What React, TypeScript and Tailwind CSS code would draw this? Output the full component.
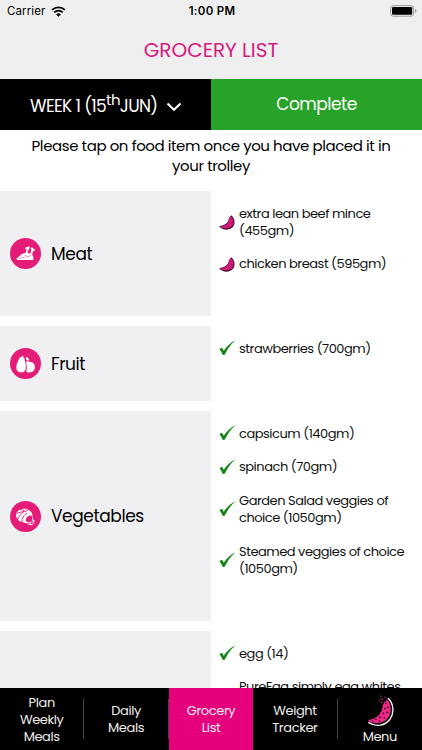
import React from 'react';

interface IGroceryItem {
  name: string;
  inTrolley: boolean;
}

interface IGroceryGroup {
  title: string;
  icon: React.ReactNode;
  height: string;
  items: IGroceryItem[];
}

const MeatIcon = () => (
  <svg viewBox="0 0 31 31" className="h-[31px] w-[31px] shrink-0">
    <circle cx="15.5" cy="15.5" r="15.5" fill="#e51b78" />
    <path
      d="M6.500 20.700c.6-1.200 2.200-1.700 3.100-2.700 1.300-1.700 3.400-2.900 5.900-3 1.600-.1 3.500-.1 5.200.8 2.100 1.100 3.200 3.600 2.500 6.100H8c-1 0-1.800-.5-1.500-1.200z"
      fill="#fff"
    />
    <path d="M16.200 15.800 18 10.500M21.200 16.500l1.400-5.300" stroke="#fff" strokeWidth="1.900" strokeLinecap="round" />
    <g fill="#fff">
      <circle cx="16.600" cy="10.200" r="1.200" />
      <circle cx="18.600" cy="9.600" r="1.200" />
      <circle cx="22" cy="10.700" r="1.200" />
      <circle cx="23.700" cy="11.900" r="1.200" />
    </g>
    <path d="M14.600 17.200c1.900 1.600 4.600 1.600 6.600.2M9.500 19.900c2.500.2 4.500-.2 5.700-.9" stroke="#e51b78" strokeWidth=".5" fill="none" />
  </svg>
);

const FruitIcon = () => (
  <svg viewBox="0 0 31 31" className="h-[31px] w-[31px] shrink-0">
    <circle cx="15.5" cy="15.5" r="15.5" fill="#e51b78" />
    <path
      d="M12.600 7.800l.8.300-.2 1.200c1.700.9 1.600 3 2 4.700.3 1.600.6 2.800.6 4.800 0 3.800-1.300 5.500-4.400 5.500-3.600 0-5.100-1.800-5.100-4.800 0-2.900 1-4.300 1.700-6.300.6-2 1.700-4.200 3.800-4.500z"
      fill="#fff"
    />
    <path
      d="M15.900 13.700c1.700-.9 3.200-.4 4.300.2 2.700-.1 4.700 2.100 4.700 5.200 0 3.200-1.600 5.200-4.300 5.200-1.600.2-3.100.1-4.400-.6.9-2.600.8-6.300-.3-10z"
      fill="#fff"
    />
    <path d="M15.700 9.400c2-.3 3.400 1 3.500 3.200-2 .1-3.300-1-3.500-3.200z" fill="#fff" />
  </svg>
);

const VegetableIcon = () => (
  <svg viewBox="0 0 31 31" className="h-[31px] w-[31px] shrink-0">
    <circle cx="15.5" cy="15.5" r="15.5" fill="#e51b78" />
    <path
      d="M6 13.600c.6-3.100 3.200-5.300 6.200-5.600 2.400-.8 5.200-.2 6.700 1.200 2.400 1 3.700 3.200 3.600 5.700-2.700-1.100-5.900.3-6.500 3.200-.2 1.500.3 2.900 1.300 3.900-2.200.4-3.900-.2-5.300-1.400-2.300-.1-3.700-1.200-4.300-2.700C6.400 16.900 5.800 15.400 6 13.600z"
      fill="#fff"
    />
    <path
      d="M6.600 12.300c2.700-.7 6.300-1.600 11.100-2.700M7.900 18.400c.8-2.800 2.400-5.400 5.800-7.500M12 20.800c-.2-3.300 1.400-6.500 5.300-9M10.200 8.400c1.700.3 3.500.9 5 2"
      fill="none"
      stroke="#e51b78"
      strokeWidth=".9"
    />
    <path
      d="M17.200 21.300c1.800.9 4.300.3 5.200-1.600.6-1.300.5-2.700-.1-3.900M17.300 22.200c1.700 1.800 3.900 1.800 5.400.7M22.700 19.300l1.800.8-1.600 1.100 1.200 1.200M20.200 22.400l1.500 1.700"
      fill="none"
      stroke="#fff"
      strokeWidth=".9"
      strokeLinecap="round"
    />
  </svg>
);

const TickIcon = () => (
  <svg viewBox="0 0 16 16" className="h-4 w-4 shrink-0">
    <path d="M.4 8.900 3 7.800l1.800 3C7.500 6.700 10.900 3 15.400.700l.3.300C11.700 4.400 8.400 9.200 5.700 14.700l-1.900.300C3 12.800 1.900 10.800.4 8.900z" fill="#118515" />
  </svg>
);

const MelonIcon = () => (
  <svg viewBox="0 0 16 16" className="h-4 w-4 shrink-0">
    <path d="M12.300 1.300c3.700 3.300 4.300 8.500 1.500 11.700-3.400 3.500-9.300 3.500-13.400.1l.3-1.200c3.800-.4 6.600-1.900 8.200-4.500 1.200-2 1-4 3.400-6.100z" fill="#4a1238" />
    <path d="M11.600 2c3.200 2.900 3.900 7.300 1.400 10.100-2.900 2.900-7.900 2.900-12.100.6 3.800-.4 6.600-1.900 8.200-4.500 1.200-2 .9-4.300 2.500-6.200z" fill="#dd1b7c" />
    <g fill="#4a1238">
      <circle cx="12.100" cy="5.300" r=".5" />
      <circle cx="13.100" cy="8.400" r=".5" />
      <circle cx="10.900" cy="9.300" r=".5" />
      <circle cx="9.600" cy="12.200" r=".55" />
      <circle cx="7.400" cy="11.400" r=".45" />
      <circle cx="4.800" cy="12.800" r=".45" />
    </g>
    <g fill="#dfabc6">
      <circle cx="9.300" cy="3" r=".45" />
      <circle cx="8.500" cy="5.200" r=".4" />
      <circle cx="9.600" cy="1" r=".4" />
    </g>
  </svg>
);

const MenuMelonIcon = () => (
  <svg viewBox="0 0 28 33" className="h-[33px] w-7">
    <path d="M22.300 3.600c5.500 5.500 6 14.200 1.800 20.400-4.700 6.800-14.300 8.400-21.300 3.600" fill="none" stroke="#eee" strokeWidth="1.400" strokeLinecap="round" />
    <path
      d="M20.800 4.300c4.700 5.200 5.200 12.600 1.500 18.200-4.200 6-12.900 7.500-19.900 3.500l.2-1.200c1.400.4 2.600-.1 3.300-1 1.700.4 2.900-.3 3.200-1.600 1.700.2 2.800-.6 3-2 1.800-.3 2.600-1.500 2.200-3.100 1.600-.7 2-2 1.300-3.300 1.300-1 1.500-2.300.8-3.500 1.200-.7 1.600-1.700 1.200-2.800l2-1z"
      fill="#f3268a"
    />
    <g fill="#111">
      <circle cx="19.800" cy="8.300" r=".8" />
      <circle cx="22.100" cy="12.200" r=".9" />
      <circle cx="18.800" cy="13.600" r=".9" />
      <circle cx="21.400" cy="17.400" r=".9" />
      <circle cx="17.400" cy="18.400" r=".9" />
      <circle cx="18.300" cy="22.800" r=".9" />
      <circle cx="14" cy="22.300" r=".9" />
      <circle cx="13.400" cy="26" r=".8" />
      <circle cx="9.900" cy="24.600" r=".8" />
      <circle cx="6.600" cy="25.900" r=".7" />
    </g>
    <g fill="#a51e60">
      <circle cx="14.800" cy="1.200" r=".7" />
      <circle cx="19" cy="2.300" r=".8" />
      <circle cx="16.300" cy="4.200" r=".9" />
      <circle cx="13.600" cy="5" r=".7" />
      <circle cx="15.500" cy="7.300" r="1" />
    </g>
  </svg>
);

const groups: IGroceryGroup[] = [
  {
    title: 'Meat',
    icon: <MeatIcon />,
    height: 'h-[125px]',
    items: [
      { name: 'extra lean beef mince (455gm)', inTrolley: false },
      { name: 'chicken breast (595gm)', inTrolley: false },
    ],
  },
  {
    title: 'Fruit',
    icon: <FruitIcon />,
    height: 'h-[75px]',
    items: [{ name: 'strawberries (700gm)', inTrolley: true }],
  },
  {
    title: 'Vegetables',
    icon: <VegetableIcon />,
    height: 'h-[210px]',
    items: [
      { name: 'capsicum (140gm)', inTrolley: true },
      { name: 'spinach (70gm)', inTrolley: true },
      { name: 'Garden Salad veggies of choice (1050gm)', inTrolley: true },
      { name: 'Steamed veggies of choice (1050gm)', inTrolley: true },
    ],
  },
  {
    title: '',
    icon: null,
    height: 'h-[210px]',
    items: [
      { name: 'egg (14)', inTrolley: true },
      { name: 'PureEgg simply egg whites (455gm)', inTrolley: true },
    ],
  },
];

const tabs = [
  { lines: ['Plan', 'Weekly', 'Meals'], divider: true },
  { lines: ['Daily', 'Meals'], divider: true },
  { lines: ['Grocery', 'List'], active: true, divider: false },
  { lines: ['Weight', 'Tracker'], divider: true },
];

const StatusBar = () => (
  <div className="grid h-[22px] grid-cols-3 items-center pl-[7px] pr-[5px] pt-px font-['Inter',sans-serif] text-black">
    <div className="flex items-center gap-[6px] text-[11.5px] tracking-[0.1px]">
      <span>Carrier</span>
      <svg viewBox="0 0 14 10" className="mb-px h-[11px] w-[15px]">
        <path d="M1 3.500a8.800 8.800 0 0 1 12 0M3.100 5.800a5.800 5.800 0 0 1 7.800 0" fill="none" stroke="#000" strokeWidth="1.800" />
        <path d="M7 10 4.800 7.700a3.200 3.200 0 0 1 4.400 0z" />
      </svg>
    </div>
    <div className="text-center text-[11.5px] font-semibold tracking-[0.3px]">1:00 PM</div>
    <div className="flex justify-end">
      <svg viewBox="0 0 27 12" className="mb-px h-3 w-[27px]">
        <rect x=".6" y=".6" width="23" height="10.6" rx="2.6" fill="none" stroke="#999" />
        <rect x="2" y="2" width="20.2" height="7.8" rx="1.2" />
        <path d="M25 4v4c1-.3 1.500-1 1.500-2S26 4.300 25 4z" fill="#999" />
      </svg>
    </div>
  </div>
);

const App: React.FC = () => {
  return (
    <div className="flex h-[750px] w-[422px] flex-col overflow-hidden bg-white font-['Poppins','Inter',sans-serif] text-[#111]">
      <header className="h-[79px] shrink-0 bg-[#efefef]">
        <StatusBar />
        <h1 className="pt-[13px] text-center text-[20px] leading-[30px] text-[#d61a7f]">GROCERY LIST</h1>
      </header>

      <div className="flex h-[51px] shrink-0 text-white">
        <button className="flex w-[211px] items-center bg-black pl-[30px] pt-[5px] text-[17px] tracking-[-0.65px]">
          <span className="whitespace-nowrap">
            WEEK 1 (15<sup className="text-[15px]">th</sup>JUN)
          </span>
          <svg viewBox="0 0 16 10" className="ml-[9px] h-[10px] w-4">
            <path d="m1.500 1.500 6.500 6.300 6.500-6.300" fill="none" stroke="#fff" strokeWidth="2" />
          </svg>
        </button>
        <button className="flex-1 bg-[#28a228] pt-px text-[17px] tracking-[-0.5px]">Complete</button>
      </div>

      <p className="h-[61px] shrink-0 px-5 pt-[6px] text-center text-[15px] leading-5 tracking-[-0.42px] text-black">
        Please tap on food item once you have placed it in
        <br />
        your trolley
      </p>

      <main className="min-h-0 flex-1 overflow-hidden">
        {groups.map((group, i) => (
          <section key={i} className={`mb-[10px] flex ${group.height}`}>
            <div className="flex w-[211px] items-center gap-[10px] bg-[#f0f0f2] pl-[10px] text-[17px] tracking-[-0.4px] text-black">
              {group.icon}
              <span className="pt-[2px]">{group.title}</span>
            </div>
            <ul className="flex flex-1 flex-col gap-[16.7px] pl-2 pt-[13.5px]">
              {group.items.map(item => (
                <li key={item.name} className="flex items-center gap-1 text-[13px] leading-[17px] tracking-[-0.48px]">
                  {item.inTrolley ? <TickIcon /> : <MelonIcon />}
                  <span className="w-[172px]">{item.name}</span>
                </li>
              ))}
            </ul>
          </section>
        ))}
      </main>

      <nav className="grid h-[62px] shrink-0 grid-cols-5 bg-black text-center text-[13px] leading-[17px] tracking-[-0.4px] text-[#eee]">
        {tabs.map(tab => (
          <button key={tab.lines.join(' ')} className={`flex items-center ${tab.active ? 'bg-[#e6007e]' : ''}`}>
            <span className="flex-1">
              {tab.lines.map(line => (
                <span key={line} className="block">{line}</span>
              ))}
            </span>
            {tab.divider && <span className="h-10 w-px bg-[#444]" />}
          </button>
        ))}
        <button className="flex flex-col items-center pt-[7px]">
          <MenuMelonIcon />
          <span>Menu</span>
        </button>
      </nav>
    </div>
  );
};

export default App;
